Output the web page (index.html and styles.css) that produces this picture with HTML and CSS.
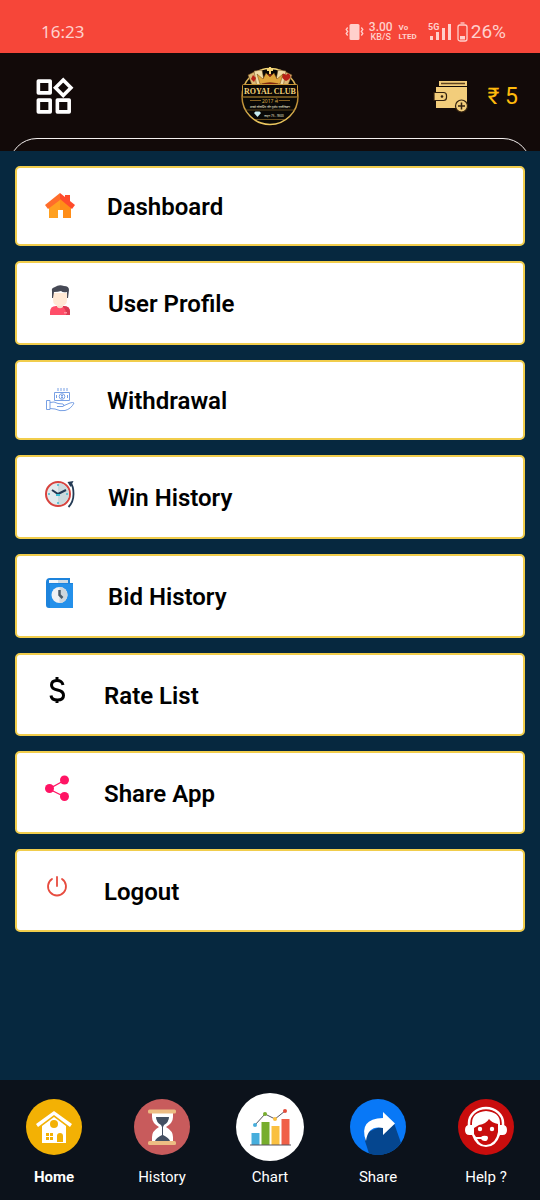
FILE: index.html
```html
<!DOCTYPE html>
<html lang="en">
<head>
<meta charset="utf-8">
<meta name="viewport" content="width=device-width, initial-scale=1">
<title>Royal Club</title>
<link rel="stylesheet" href="styles.css">
</head>
<body>
<div class="status">
  <span class="time">16:23</span>
  <div class="status-right">
    <svg width="19" height="18" viewBox="0 0 19 18" fill="none" stroke="currentColor" stroke-width="1.3"><rect x="4.500" y="1" width="10" height="16" rx="1.500" fill="currentColor" stroke="none"/><path d="M2.700 4.500 1.200 6.500l1.500 2-1.500 2 1.500 2M16.300 4.500l1.500 2-1.500 2 1.500 2-1.500 2"/></svg>
    <span class="speed"><span class="speed-num">3.00</span><span class="speed-unit">KB/S</span></span>
    <span class="volte"><span>Vo</span><span>LTED</span></span>
    <svg class="signal" width="25" height="19" viewBox="0 0 25 19" fill="currentColor"><text x="0" y="8" class="five-g">5G</text><rect x="2" y="14" width="3" height="4"/><rect x="8" y="10" width="3" height="8"/><rect x="14" y="6" width="3" height="12"/><rect x="20" y="2" width="3" height="16"/></svg>
    <span class="battery"><svg width="11" height="20" viewBox="0 0 11 20" fill="none" stroke="currentColor" stroke-width="1.300"><rect x="1" y="3" width="9" height="16" rx="2"/><path d="M3.500 1h4"/><rect x="3" y="14" width="5" height="3.500" fill="currentColor" stroke="none"/></svg>26%</span>
  </div>
</div>

<header class="header">
  <div class="header-row">
    <button class="menu-btn" type="button" aria-label="Menu"><svg width="38" height="38" viewBox="0 0 37 37" fill="none" stroke="#fff" stroke-width="3.500" stroke-linejoin="round"><rect x="2.300" y="4" width="11.500" height="11.500"/><rect x="2.300" y="22.500" width="11.500" height="11.500"/><rect x="20.800" y="22.500" width="11.500" height="11.500"/><path stroke-linejoin="miter" d="M26.500 3l7.500 7.500-7.500 7.500-7.500-7.500z"/></svg></button>
    <svg class="logo" width="60" height="60" viewBox="0 0 60 60" role="img" aria-label="Royal Club">
      <defs><linearGradient id="gold" x1="0" y1="0" x2="0" y2="1"><stop offset="0" stop-color="#f6d878"/><stop offset=".5" stop-color="#b3812c"/><stop offset="1" stop-color="#ecc860"/></linearGradient></defs>
      <circle cx="30" cy="30.500" r="28" fill="#090806" stroke="url(#gold)" stroke-width="1.500"/>
      <g stroke="#6b4317" stroke-width=".5">
        <path fill="#dbb873" d="M8 9l8-4 7 14-9 5zM52 9l-8-4-7 14 9 5z"/>
        <path fill="#f1dca5" d="M14 5l8-1 3 15-8 2zM46 5l-8-1-3 15 8 2z"/>
      </g>
      <path fill="#b92117" d="M46 9q2-3 4 0t-4 6q-5-3-4-6t4 0M13 9l3 3-2 4-3-3z"/>
      <path fill="#8a1d10" d="M22 14q8-12 16 0v5H22z"/>
      <path fill="#e0a53b" stroke="#70430f" stroke-width=".5" d="M20 18l-3-10 6 5 3-6 4 4 4-4 3 6 6-5-3 10q-10-3-20 0z"/>
      <path fill="#f7d779" d="M29 1h2v2h2v2h-2v3h-2V5h-2V3h2z"/>
      <rect x="2.500" y="18.500" width="55" height="12.500" rx="1" fill="#0b0805" stroke="#c99637"/>
      <text x="30" y="28" class="logo-name">ROYAL CLUB</text>
      <path d="M10 34.500h11M39 34.500h11" stroke="#a67929" stroke-width=".8"/>
      <text x="30" y="36.500" class="logo-year">2017 से</text>
      <text x="30" y="42" class="logo-tag">सबसे लोकप्रिय और ट्रस्टेड एप्लीकेशन</text>
      <path d="M5 44h50" stroke="#8f6825" stroke-width=".6"/>
      <path fill="#c7edf2" d="M14 47l1.500-1.500h4L21 47l-3.500 4z"/>
      <text x="34" y="50.500" class="logo-tag">लाइन 75 - 9500</text>
      <path d="M15 53.500h30" stroke="#a67929" stroke-width=".6"/>
    </svg>
    <div class="wallet">
      <svg width="36" height="34" viewBox="0 0 36 34" aria-hidden="true"><path fill="#f2cd7b" d="M6 2h28v5H6z"/><path stroke="#5d4220" stroke-width="1.500" d="M8 4.500h24"/><path fill="#f2cd7b" d="M3 8h31v21H3z"/><path fill="#f2cd7b" stroke="#32210f" stroke-width="1.200" d="M1 13.500h9.500q3 0 3 3v2q0 3-3 3H1z"/><circle cx="9" cy="17.500" r="1.300" fill="#32210f"/><circle cx="28.500" cy="27" r="6" fill="#f2cd7b" stroke="#32210f" stroke-width="1.200"/><path stroke="#32210f" stroke-width="1.500" d="M25 27h7M28.500 23.500v7"/></svg>
      <span class="amount">₹ 5</span>
    </div>
  </div>
  <div class="curve-clip"><div class="curve"></div></div>
</header>

<main class="main">
  <nav class="menu" aria-label="Account">
    <a class="item short" href="#"><span class="icon"><svg width="32" height="32" viewBox="0 0 32 32"><path fill="#ffa020" d="M5 15L16 5l11 10v13h-8v-8h-5v8H5z"/><path fill="#ff8d18" d="M16 5l11 10v13h-8v-8h-3z"/><path fill="#ff6d2b" d="M1 15L16 3v7L4 19z"/><path fill="#ff4b2b" d="M16 3l5 4V5h5v6l5 4-3 4-12-10z"/></svg></span><span class="label">Dashboard</span></a>
    <a class="item tall" href="#"><span class="icon"><svg width="32" height="32" viewBox="0 0 32 32"><path fill="#ff4e69" d="M6 31v-3q0-6 6-6h8q6 0 6 6v3z"/><path fill="#d93a52" d="M18 22h2q6 0 6 6v3h-4q1-5-4-9z"/><path fill="#ff8c9a" d="M20 28h3v1.500h-3z"/><path fill="#f4dfcc" d="M13 19h6v4q-3 2.500-6 0z"/><path fill="#ffe9d5" d="M9 9h14v7q0 6-7 6t-7-6z"/><path fill="#464955" d="M8 14V7q-1-3 3-4 4-3 9-1 5 0 5 4l-1 8h-1V8q-4 1-6-1-3 1-7 1l-1 6z"/></svg></span><span class="label">User Profile</span></a>
    <a class="item short" href="#"><span class="icon"><svg width="32" height="32" viewBox="0 0 32 32" fill="none" stroke="#78a0e4" stroke-width="1"><path d="M10.500 8.500h15v8h-15zM14 4v3M17 4v3M20 4v3M23 4v3M12.500 11v3M23.500 11v3"/><circle cx="18" cy="12.500" r="2.800"/><path d="M18 10.500v4M17 11.500h2M17 13.500h2M2.500 16.500h3.500v9H2.500zM6 18.500q4-1.500 8 1l5 .500q2 1.500 0 2.500h-6M19 22l7-3q3-1 4 0-3 6-9 7.500-5 1-10-1.500l-5-.500"/></svg></span><span class="label">Withdrawal</span></a>
    <a class="item tall" href="#"><span class="icon"><svg width="32" height="32" viewBox="0 0 32 32" fill="none"><circle cx="14" cy="16" r="12" fill="#e2ebed" stroke="#d8433e" stroke-width="2"/><path fill="#ccdadd" d="M14 5a11 11 0 010 22z"/><path stroke="#43b8cf" stroke-width="1.500" d="M14 6v2M14 24v2M4 16h2M22 16h2"/><path stroke="#233a54" stroke-width="2" d="M8 12l6 4 8-4"/><path stroke="#38bdd2" stroke-width="2" d="M12 17h4"/><path stroke="#233a54" stroke-width="1.800" d="M24.500 29q5-5 5-13t-3-11"/><path fill="#233a54" d="M23.500 4l6-1-3 6z"/></svg></span><span class="label">Win History</span></a>
    <a class="item tall" href="#"><span class="icon"><svg width="32" height="32" viewBox="0 0 32 32"><path fill="#1d83dc" d="M2 5q0-4 4-4h20v5h3v25H5q-3 0-3-3z"/><path fill="#2490ea" d="M6 7h23v24H6z"/><path fill="#f4f7fa" d="M5 3h19v3H5z"/><path fill="#d0dce5" d="M14 3h10v3H14z"/><circle cx="15.500" cy="18" r="8" fill="#f0f2f5"/><path fill="#cfd6dc" d="M15.500 10a8 8 0 010 16z"/><path stroke="#4b5b69" stroke-width="2.500" fill="none" d="M15.500 13v5l3 3"/></svg></span><span class="label">Bid History</span></a>
    <a class="item plain" href="#"><span class="icon"><svg width="26" height="32" viewBox="0 0 26 32" fill="none" stroke="#000" stroke-width="3"><path d="M19 10q-1-4.500-6-4.500-5.500 0-5.500 4.500 0 4 6 5t6 5.500q0 4.500-6 4.500t-6.500-4.500M13 2v4M13 24v4"/></svg></span><span class="label">Rate List</span></a>
    <a class="item plain" href="#"><span class="icon"><svg width="26" height="32" viewBox="0 0 26 32"><path stroke="#ff1464" stroke-width="1.300" fill="none" d="M21 7L5 16l16 8"/><g fill="#ff1464"><circle cx="20.500" cy="7" r="4.500"/><circle cx="5.500" cy="15.500" r="4.500"/><circle cx="20.500" cy="23.500" r="4.500"/></g></svg></span><span class="label">Share App</span></a>
    <a class="item plain" href="#"><span class="icon"><svg width="26" height="32" viewBox="0 0 26 32" fill="none" stroke="#e74c3f" stroke-width="1.800" stroke-linecap="round"><path d="M13 6v9M8 8a9 9 0 1010 0"/></svg></span><span class="label">Logout</span></a>
  </nav>
</main>

<nav class="tabs" aria-label="Main">
  <a class="tab active" href="#"><span class="tab-icon"><svg width="56" height="56" viewBox="0 0 56 56"><circle cx="28" cy="28" r="28" fill="#f3b104"/><path fill="#fff" d="M28 12l18 13-2 3-16-12-16 12-2-3z"/><path fill="#fff" d="M28 18l12 9v17H16V27z"/><circle cx="28" cy="25" r="4" fill="#f3b104"/><path fill="#f3b104" d="M20 34h3v3h-3zM24 34h3v3h-3zM20 38h3v3h-3zM24 38h3v3h-3zM31 43v-6q0-3 3-3t3 3v6z"/></svg></span>Home</a>
  <a class="tab" href="#"><span class="tab-icon"><svg width="56" height="56" viewBox="0 0 56 56"><circle cx="28" cy="28" r="28" fill="#c85b5c"/><path fill="#fff" d="M18 13h21v5q0 6-7 10 7 4 7 10v5H18v-5q0-6 7-10-7-4-7-10z"/><path fill="#445062" d="M22 18h13q0 5-5 8l-1 2v8q6 3 7 6H21q1-3 7-6v-8l-1-2q-5-3-5-8z"/><rect x="14" y="10.500" width="28" height="4" rx="1.500" fill="#edbd83"/><rect x="14" y="42" width="28" height="4" rx="1.500" fill="#edbd83"/></svg></span>History</a>
  <a class="tab" href="#"><span class="tab-icon"><svg width="68" height="68" viewBox="0 0 68 68"><circle cx="34" cy="34" r="34" fill="#fff"/><path fill="#47aedc" d="M15.500 40h8v12h-8z"/><path fill="#77ad2d" d="M25.500 29h8v23h-8z"/><path fill="#fac040" d="M35.500 33h8v19h-8z"/><path fill="#f06048" d="M45.500 26h8v26h-8z"/><path stroke="#575360" d="M14 52h41M19 32l10-11 10 5 10-8" fill="none"/><circle cx="19" cy="32" r="2" fill="#47aedc"/><circle cx="29" cy="21" r="2" fill="#77ad2d"/><circle cx="39" cy="26" r="2" fill="#fac040"/><circle cx="49" cy="18" r="2" fill="#e34d3b"/></svg></span>Chart</a>
  <a class="tab" href="#"><span class="tab-icon"><svg width="56" height="56" viewBox="0 0 56 56"><circle cx="28" cy="28" r="28" fill="#0878f7"/><path fill="#05468f" d="M15 42l1-8 16-7 12-3 7 20A28 28 0 0119 54.500z"/><path fill="#fff" d="M33 13l12 11.500L33 36v-7q-15-3-17 13-8-22 17-23z"/></svg></span>Share</a>
  <a class="tab" href="#"><span class="tab-icon"><svg width="56" height="56" viewBox="0 0 56 56"><circle cx="28" cy="28" r="28" fill="#c90d0d"/><path fill="none" stroke="#fff" stroke-width="2.500" d="M11 27v-3a17 15 0 0134 0v3"/><path fill="#fff" d="M14 24q0-11 14-12 14 1 14 12v2h2.500q4.500 0 4.500 5t-4.500 5H42q-4 12-14 12T14 36h-2.500Q7 36 7 31t4.500-5H14z"/><path fill="#c90d0d" d="M16 29l5-3q7-1 10-6 3 4 9 5v8q-2 12-12 13-6 0-9-6h4q2 3 6 1.500 2-3 0-4.500-4-1-6 1h-5l-2-3z"/><circle cx="22" cy="30" r="2.200" fill="#fff"/><circle cx="34" cy="30" r="2.200" fill="#fff"/></svg></span>Help ?</a>
</nav>
</body>
</html>
```
FILE: styles.css
```css
* { box-sizing: border-box; }

body {
  margin: 0;
  min-height: 100vh;
  display: flex;
  flex-direction: column;
  background: #06283f;
  font-family: Roboto, "Noto Sans", sans-serif;
}

svg { display: block; flex: none; }
a { color: inherit; text-decoration: none; }

.status {
  display: flex;
  justify-content: space-between;
  align-items: center;
  height: 53px;
  padding: 10px 34px 0 41px;
  background: #f64639;
  color: #ffd0cc;
}
.time { font-size: 17px; line-height: 22px; font-family: "Noto Sans", sans-serif; }
.status-right { display: flex; align-items: center; }
.speed {
  display: flex;
  flex-direction: column;
  align-items: center;
  margin-left: 5px;
  font-weight: 500;
}
.speed-num { font-size: 12px; line-height: 12px; }
.speed-unit { font-size: 9px; line-height: 9px; }
.volte {
  display: flex;
  flex-direction: column;
  margin-left: 6px;
  font-size: 8px;
  line-height: 9px;
  font-weight: 700;
}
.signal { margin-left: 11px; }
.five-g { font-size: 9px; font-weight: 700; }
.battery {
  display: flex;
  align-items: center;
  gap: 3px;
  margin-left: 4px;
  font-size: 19px;
  line-height: 22px;
}

.header { background: #120a09; }
.header-row {
  display: grid;
  grid-template-columns: 1fr auto 1fr;
  align-items: center;
  height: 85px;
  padding: 0 22px 0 36px;
}
.menu-btn {
  justify-self: start;
  padding: 0;
  border: 0;
  background: none;
}
.logo { margin-right: 14px; }
.logo-name {
  font: bold 8px "Liberation Serif", serif;
  fill: #f4d27a;
  text-anchor: middle;
}
.logo-year { font: 5px "Noto Sans", sans-serif; fill: #d9a947; text-anchor: middle; }
.logo-tag { font: 3px "Noto Sans", sans-serif; fill: #f6efdc; text-anchor: middle; }
.wallet {
  justify-self: end;
  display: flex;
  align-items: center;
  gap: 18px;
}
.amount { padding-top: 2px; font-size: 23px; line-height: 28px; color: #ffba0c; }

.curve-clip { height: 13px; padding: 0 9px; overflow: hidden; }
.curve {
  height: 56px;
  border: 1px solid #f4f0ef;
  border-radius: 28px;
}

.main { flex: 1; padding: 15px; }
.menu { display: flex; flex-direction: column; gap: 15px; }
.item {
  display: flex;
  padding: 20px 27px;
  border: 2px solid #f1cd4c;
  border-radius: 5px;
  background: #fff;
  color: #000;
}
.label { padding-top: 7px; font-size: 24px; line-height: 28px; font-weight: 600; }
.short { height: 80px; gap: 31px; padding-top: 22px; }
.short .label { padding-top: 3px; }
.tall { height: 84px; gap: 32px; padding-top: 21px; }
.tall .label { padding-top: 6px; }
.plain { height: 83px; gap: 34px; }

.tabs {
  display: grid;
  grid-template-columns: repeat(5, 1fr);
  padding: 12px 0 13px;
  background: #0c121b;
  color: #fff;
}
.tab {
  display: flex;
  flex-direction: column;
  align-items: center;
  gap: 5px;
  font-size: 15px;
  line-height: 20px;
}
.tab-icon { display: flex; align-items: center; height: 70px; }
.active { font-weight: 700; }
```
